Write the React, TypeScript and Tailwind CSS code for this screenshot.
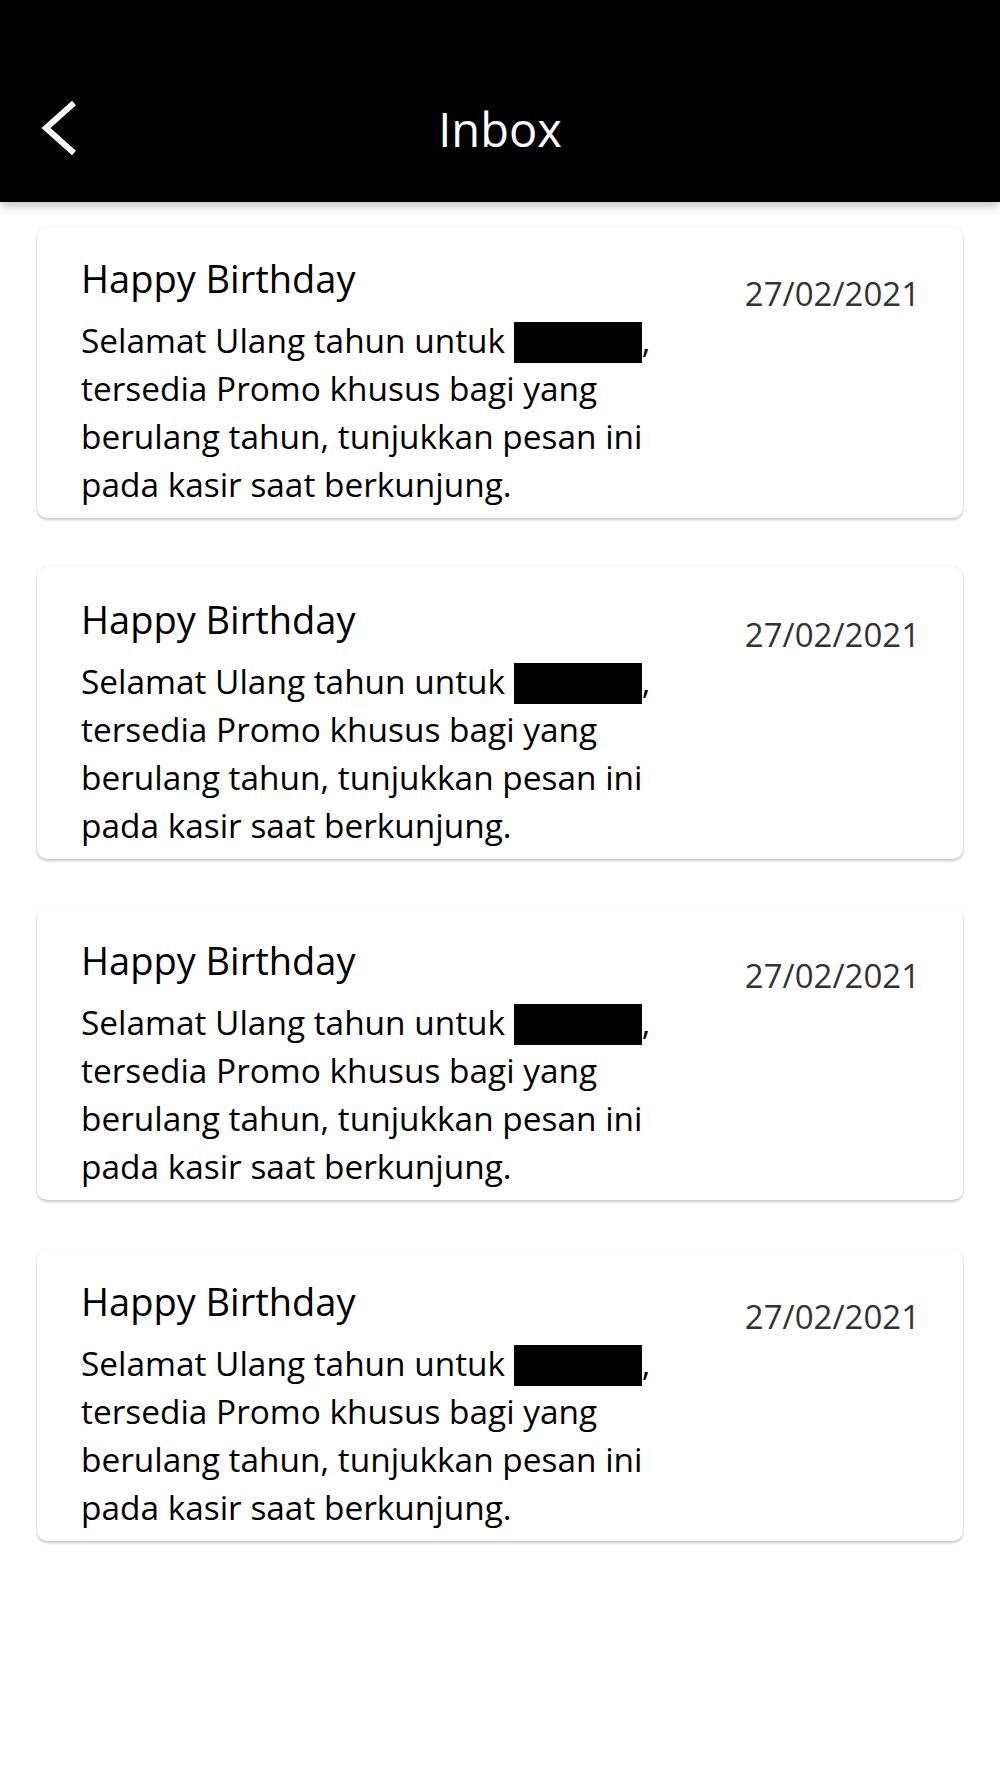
import React from "react";

const items = [0, 1, 2, 3];

function Card() {
  return (
    <div className="flex justify-between rounded-[10px] bg-white shadow-[0_2px_3px_rgba(0,0,0,0.22),0_0_1px_rgba(0,0,0,0.12)] h-[292px]">
      <div className="pl-[44px] pt-[29px] w-[665px]">
        <div className="text-[38px] leading-[46px] text-black">Happy Birthday</div>
        <div className="text-[33.4px] leading-[48px] text-black mt-[15px]">
          Selamat Ulang tahun untuk{" "}
          <span className="inline-block bg-black w-[128px] h-[41px] align-[-10px]"></span>,
          tersedia Promo khusus bagi yang berulang tahun, tunjukkan pesan ini pada kasir saat berkunjung.
        </div>
      </div>
      <div className="pr-[43px] pt-[48px] text-[33px] leading-[40px] text-[#333]">27/02/2021</div>
    </div>
  );
}

export default function App() {
  return (
    <div className="w-[1000px] h-[1778px] bg-white" style={{ fontFamily: "'Open Sans', sans-serif" }}>
      <div className="relative z-10 h-[202px] bg-black shadow-[0_4px_10px_rgba(0,0,0,0.25)] flex items-center pt-[56px]">
        <div className="w-[120px] pl-[40px] flex items-center">
          <svg width="40" height="56" viewBox="0 0 40 56" fill="none">
            <path d="M34 2 L6 27 L34 52" stroke="white" strokeWidth="6" strokeLinecap="butt" strokeLinejoin="miter" />
          </svg>
        </div>
        <div className="flex-1 text-center text-white text-[47px] leading-[56px] pr-[120px]">Inbox</div>
      </div>
      <div className="flex flex-col gap-[49px] px-[37px] pt-[24px]">
        {items.map((i) => (
          <Card key={i} />
        ))}
      </div>
    </div>
  );
}
